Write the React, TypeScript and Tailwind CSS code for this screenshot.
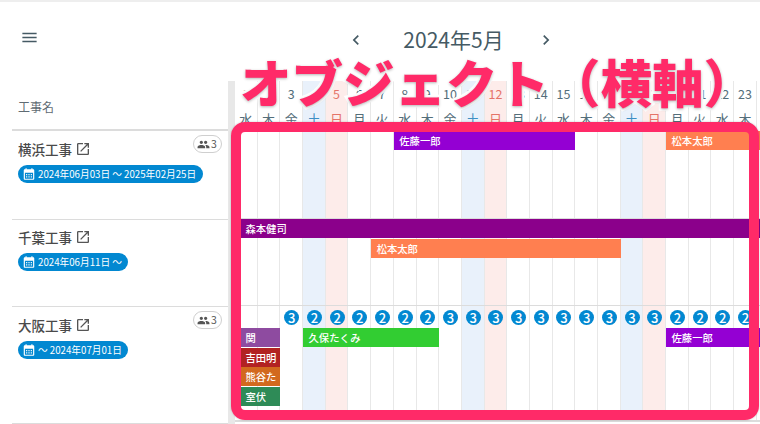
import React from "react";

const font = { fontFamily: '"Noto Sans CJK JP", "Noto Sans", sans-serif' };

const weekNames = ["水", "木", "金", "土", "日", "月", "火"];
const days = Array.from({ length: 24 }, (_, i) => i + 1);
const counts = [3, 2, 2, 2, 2, 2, 2, 3, 3, 3, 3, 3, 3, 3, 3, 3, 3, 2, 2, 2, 2];

const isSat = (d: number) => d % 7 === 4;
const isSun = (d: number) => d % 7 === 5;

const Icon = ({ d, className }: { d: string; className: string }) => (
	<svg viewBox="0 0 24 24" fill="currentColor" className={className}>
		<path d={d} />
	</svg>
);

const menuPath = "M3 18h18v-2H3v2zm0-5h18v-2H3v2zm0-7v2h18V6H3z";
const openPath =
	"M19 19H5V5h7V3H5c-1.11 0-2 .9-2 2v14c0 1.1.89 2 2 2h14c1.1 0 2-.9 2-2v-7h-2v7zM14 3v2h3.59l-9.83 9.83 1.41 1.41L19 6.41V10h2V3h-7z";
const peoplePath =
	"M16 11c1.66 0 2.99-1.34 2.99-3S17.66 5 16 5c-1.66 0-3 1.34-3 3s1.34 3 3 3zm-8 0c1.66 0 2.99-1.34 2.99-3S9.66 5 8 5C6.34 5 5 6.34 5 8s1.34 3 3 3zm0 2c-2.33 0-7 1.17-7 3.5V19h14v-2.5c0-2.33-4.67-3.5-7-3.5zm8 0c-.29 0-.62.02-.97.05 1.16.84 1.97 1.97 1.97 3.45V19h6v-2.5c0-2.33-4.67-3.5-7-3.5z";
const calendarPath =
	"M19 4h-1V2h-2v2H8V2H6v2H5c-1.1 0-2 .9-2 2v14c0 1.1.9 2 2 2h14c1.1 0 2-.9 2-2V6c0-1.1-.9-2-2-2zm0 16H5V10h14v10zM9 14H7v-2h2v2zm4 0h-2v-2h2v2zm4 0h-2v-2h2v2zm-8 4H7v-2h2v2zm4 0h-2v-2h2v2zm4 0h-2v-2h2v2z";
const leftPath = "M15.41 7.41 14 6l-6 6 6 6 1.41-1.41L10.83 12z";
const rightPath = "M10 6 8.59 7.41 13.17 12l-4.58 4.59L10 18l6-6z";

const dayBg = (d: number) =>
	isSat(d) ? "bg-[#e9f1fb]" : isSun(d) ? "bg-[#fdecea]" : "bg-white";

const dayText = (d: number) =>
	isSat(d) ? "text-[#3d8fc4]" : isSun(d) ? "text-[#e57368]" : "text-[#546e7a]";

const gridCols = "grid grid-cols-[repeat(24,22.7px)]";

const Columns = () => (
	<div className={`absolute inset-0 ${gridCols}`}>
		{days.map((d) => (
			<div key={d} className={`border-r border-[#e8e8e8] ${dayBg(d)}`} />
		))}
	</div>
);

type BarData = {
	name: string;
	color: string;
	col: number;
	span: number;
	row: number;
	inset?: boolean;
};

const Bar = ({ name, color, col, span, row, inset }: BarData) => (
	<div
		className={`h-[19px] mb-[0.5px] pl-[5.5px] text-[10.3px] leading-[19px] font-medium text-white whitespace-nowrap overflow-hidden ${
			inset ? "ml-[5px]" : ""
		}`}
		style={{
			backgroundColor: color,
			gridColumn: `${col} / span ${span}`,
			gridRow: row,
		}}
	>
		{name}
	</div>
);

const ProjectInfo = ({
	title,
	period,
	pillWidth,
	members,
	height,
	compact,
}: {
	title: string;
	period: string;
	pillWidth: string;
	members?: number;
	height: string;
	compact?: boolean;
}) => (
	<div className={`${height} border-b border-[#dcdcdc] px-[6px]`}>
		<div className={`flex items-start justify-between ${compact ? "h-[33px]" : "h-[34px]"}`}>
			<div className={`flex items-center gap-[3px] ${compact ? "h-[34px]" : "h-[36px]"}`}>
				<span className="text-[13.5px] font-medium text-[#4a4a4a]">{title}</span>
				<Icon d={openPath} className="w-[16px] h-[16px] text-[#555]" />
			</div>
			{members && (
				<div className="flex items-center gap-[1px] h-[18px] w-[29px] mt-[4px] pl-[3px] rounded-full border border-[#cfcfcf] text-[10.5px] text-[#555]">
					<Icon d={peoplePath} className="w-[13px] h-[13px]" />
					<span>{members}</span>
				</div>
			)}
		</div>
		<div
			className={`flex items-center gap-[2px] h-[18px] pl-[4px] rounded-full bg-[#0288d1] text-[9.7px] text-white whitespace-nowrap ${pillWidth}`}
		>
			<Icon d={calendarPath} className="w-[14px] h-[14px] shrink-0" />
			<span>{period}</span>
		</div>
	</div>
);

export default function App() {
	return (
		<div
			className="relative w-[760px] h-[424px] overflow-hidden bg-white border-t-2 border-[#eeeeee]"
			style={font}
		>
			{/* 月の切り替え */}
			<div className="relative h-[79px] flex justify-center items-start pt-[22px] pl-[142px] text-[#455a64]">
				<Icon d={menuPath} className="absolute left-[20px] top-[26px] w-[19px] h-[19px]" />
				<div className="flex items-center h-[32px]">
					<Icon d={leftPath} className="w-[20px] h-[20px]" />
					<span className="ml-[37px] mr-[32px] text-[21px]">2024年5月</span>
					<Icon d={rightPath} className="w-[20px] h-[20px]" />
				</div>
			</div>

			<div className="flex">
				<div className="w-[228px] pl-[12px] shrink-0">
					<div className="h-[50px] flex items-end pb-[13px] pl-[6px] border-b-2 border-[#dcdcdc] text-[12px] text-[#5f6b73]">
						工事名
					</div>
					<ProjectInfo
						title="横浜工事"
						period="2024年06月03日 ～ 2025年02月25日"
						pillWidth="w-[185px]"
						members={3}
						height="h-[89px]"
					/>
					<ProjectInfo
						title="千葉工事"
						period="2024年06月11日 ～"
						pillWidth="w-[110px]"
						height="h-[87px]"
						compact
					/>
					<ProjectInfo
						title="大阪工事"
						period="～ 2024年07月01日"
						pillWidth="w-[110px]"
						members={3}
						height="h-[117px]"
					/>
				</div>
				<div className="w-[7px] h-[345px] bg-[#e8e8e8] shrink-0" />

				<div className="w-[525px] shrink-0 overflow-hidden">
					<div className={`${gridCols} h-[24px] border-b border-[#e0e0e0]`}>
						{days.map((d) => (
							<div
								key={d}
								className={`border-r border-[#e8e8e8] text-center text-[12.5px] leading-[26px] ${dayBg(d)} ${dayText(d)}`}
							>
								{d}
							</div>
						))}
					</div>
					<div className={`${gridCols} h-[25px] border-b-2 border-[#dcdcdc]`}>
						{days.map((d) => (
							<div
								key={d}
								className={`border-r border-[#e8e8e8] text-center text-[13px] leading-[28px] ${dayBg(d)} ${dayText(d)}`}
							>
								{weekNames[(d - 1) % 7]}
							</div>
						))}
					</div>

					<div className="relative h-[89px] border-b border-[#dcdcdc]">
						<Columns />
						<div className={`relative ${gridCols} pt-[1px]`}>
							<Bar name="佐藤一郎" color="#9400d3" col={8} span={8} row={1} />
							<Bar name="松本太郎" color="#ff7f50" col={20} span={5} row={1} />
						</div>
					</div>

					<div className="relative h-[87px] border-b border-[#dcdcdc]">
						<Columns />
						<div className={`relative ${gridCols}`}>
							<Bar name="森本健司" color="#8b008b" col={1} span={24} row={1} inset />
							<Bar name="松本太郎" color="#ff7f50" col={7} span={11} row={2} />
						</div>
					</div>

					<div className="relative h-[116px] border-b-2 border-[#dcdcdc]">
						<Columns />
						<div className={`relative ${gridCols} pt-[4px]`}>
							{counts.map((n, i) => (
								<div
									key={i}
									className="flex justify-center mb-[3px]"
									style={{ gridColumn: i + 3, gridRow: 1 }}
								>
									<div className="w-[15px] h-[15px] rounded-full bg-[#0288d1] text-center text-[13px] leading-[15px] font-medium text-white">
										{n}
									</div>
								</div>
							))}
							<Bar name="関" color="#8e4ba0" col={1} span={2} row={2} inset />
							<Bar name="久保たくみ" color="#32cd32" col={4} span={6} row={2} />
							<Bar name="佐藤一郎" color="#9400d3" col={20} span={5} row={2} />
							<Bar name="吉田明" color="#b22222" col={1} span={2} row={3} inset />
							<Bar name="熊谷た" color="#d2691e" col={1} span={2} row={4} inset />
							<Bar name="室伏" color="#2e8b57" col={1} span={2} row={5} inset />
						</div>
					</div>
				</div>
			</div>

			{/* 説明の注釈 */}
			<div className="absolute left-[231px] top-[120px] w-[528px] h-[298px] rounded-[14px] border-[10px] border-[#ff2a68] shadow-[0_0_2px_rgba(0,0,0,0.25)]" />
			<div className="absolute left-[240px] top-[47px] text-[51.5px] leading-[64px] font-black text-[#ff2a68] whitespace-nowrap [-webkit-text-stroke:5px_white] [paint-order:stroke_fill] [text-shadow:0_1px_3px_rgba(0,0,0,0.3)]">
				オブジェクト（横軸）
			</div>
		</div>
	);
}
